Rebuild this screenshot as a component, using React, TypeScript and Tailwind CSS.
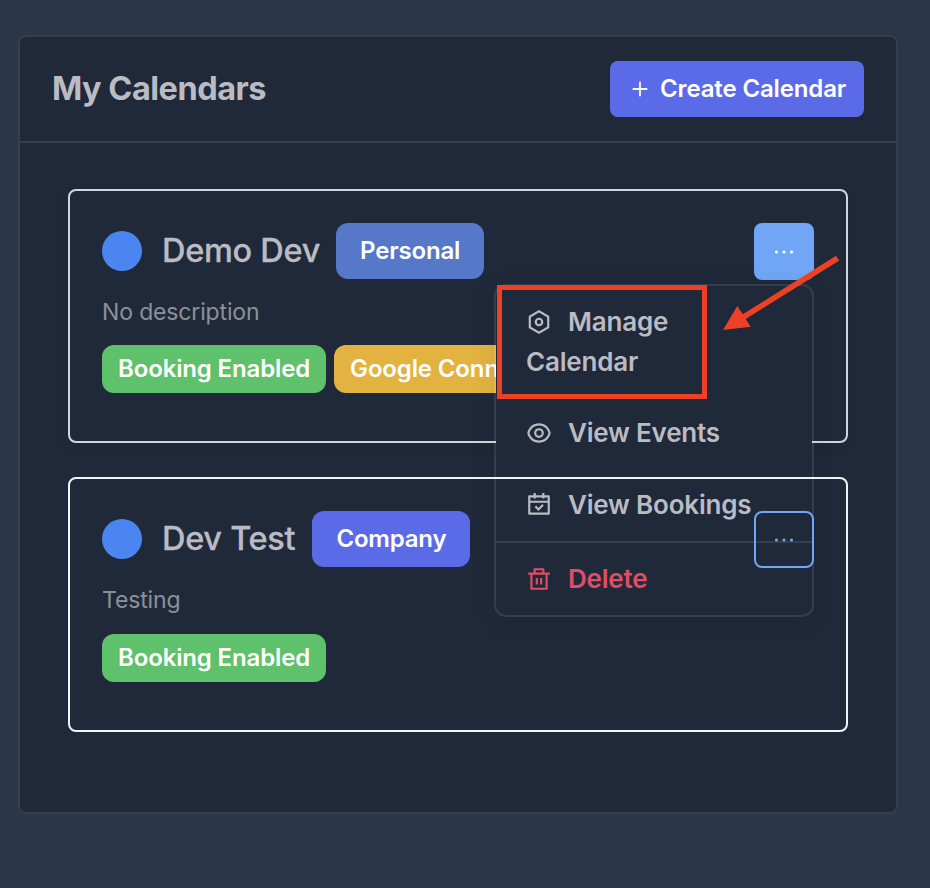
import type { ReactNode } from "react";

const iconProps = {
  viewBox: "0 0 24 24",
  fill: "currentColor",
  className: "inline-block h-[26px] w-[26px] shrink-0",
};

function ManageIcon() {
  return (
    <svg {...iconProps}>
      <path d="M12 1l9.5 5.5v11L12 23l-9.500-5.500v-11L12 1zm0 2.311L4.500 7.653v8.694l7.500 4.342 7.500-4.342V7.653L12 3.311zM12 16a4 4 0 1 1 0-8 4 4 0 0 1 0 8zm0-2a2 2 0 1 0 0-4 2 2 0 0 0 0 4z" />
    </svg>
  );
}

function EyeIcon() {
  return (
    <svg {...iconProps}>
      <path d="M12 3c5.392 0 9.878 3.880 10.819 9-.940 5.120-5.427 9-10.819 9-5.392 0-9.878-3.880-10.819-9C2.121 6.880 6.608 3 12 3zm0 16a9.005 9.005 0 0 0 8.777-7 9.005 9.005 0 0 0-17.554 0A9.005 9.005 0 0 0 12 19zm0-2.500a4.500 4.500 0 1 1 0-9 4.500 4.500 0 0 1 0 9zm0-2a2.500 2.500 0 1 0 0-5 2.500 2.500 0 0 0 0 5z" />
    </svg>
  );
}

function BookingsIcon() {
  return (
    <svg {...iconProps}>
      <path d="M9 1v2h6V1h2v2h4a1 1 0 0 1 1 1v16a1 1 0 0 1-1 1H3a1 1 0 0 1-1-1V4a1 1 0 0 1 1-1h4V1h2zm11 9H4v9h16v-9zm-4.964 1.136l1.414 1.414-4.950 4.950-3.536-3.536L9.380 12.550l2.121 2.122 3.536-3.536zM7 5H4v3h16V5h-3v1h-2V5H9v1H7V5z" />
    </svg>
  );
}

function DeleteIcon() {
  return (
    <svg {...iconProps}>
      <path d="M17 6h5v2h-2v13a1 1 0 0 1-1 1H5a1 1 0 0 1-1-1V8H2V6h5V3a1 1 0 0 1 1-1h8a1 1 0 0 1 1 1v3zm1 2H6v12h12V8zm-9 3h2v6H9v-6zm4 0h2v6h-2v-6zM9 4v2h6V4H9z" />
    </svg>
  );
}

function MoreDots() {
  return (
    <svg viewBox="0 0 20 4" fill="currentColor" className="h-1 w-5">
      <circle cx="2.500" cy="2" r="1.600" />
      <circle cx="10" cy="2" r="1.600" />
      <circle cx="17.500" cy="2" r="1.600" />
    </svg>
  );
}

function StatusBadge({ color, children }: { color: string; children: ReactNode }) {
  return (
    <span
      className={`flex h-12 shrink-0 items-center rounded-xl px-4 text-[24px] font-semibold tracking-[-0.14px] whitespace-nowrap text-white ${color}`}
    >
      {children}
    </span>
  );
}

type CardProps = {
  name: string;
  kind: string;
  kindClass: string;
  description: string;
  frameClass: string;
  moreClass: string;
  badgesClass: string;
  badges: ReactNode;
  menu?: ReactNode;
};

function CalendarCard(p: CardProps) {
  return (
    <article className={`relative rounded-lg border-2 px-8 pt-8 ${p.frameClass}`}>
      <div className="flex h-14 items-center">
        <span className="h-10 w-10 rounded-full bg-[#4b86f0]" />
        <h2 className="ml-5 text-[32.500px] font-medium tracking-[-0.28px] whitespace-nowrap text-[#bbbcc3] [-webkit-text-stroke:0.3px_#bbbcc3]">
          {p.name}
        </h2>
        <span
          className={`flex h-14 items-center justify-center rounded-xl text-[24px] font-semibold tracking-[-0.2px] text-white ${p.kindClass}`}
        >
          {p.kind}
        </span>
        <button
          className={`ml-auto flex h-[57px] w-[60px] items-center justify-center self-start rounded-lg border-2 border-[#70a6f5] ${p.moreClass}`}
        >
          <MoreDots />
        </button>
      </div>
      <p className="mt-[15px] h-9 text-[23px] leading-9 tracking-[-0.15px] text-[#8c9199]">{p.description}</p>
      <div className={`flex gap-2 overflow-hidden ${p.badgesClass}`}>{p.badges}</div>
      {p.menu}
    </article>
  );
}

function ActionsMenu() {
  return (
    <div className="absolute top-[93px] right-8 h-[333px] w-80 rounded-xl border-2 border-white/10 bg-[#20293a] bg-clip-padding text-[26px] leading-10 font-semibold tracking-[-0.2px] text-[#bbbcc3] shadow-[0_4px_24px_rgba(0,0,0,0.08)]">
      <div className="h-[111px] pt-4 pr-[110px] pl-[30px]">
        <span className="mr-4 inline-flex translate-y-1">
          <ManageIcon />
        </span>
        Manage Calendar
      </div>
      <div className="flex h-[72px] items-center gap-4 pl-[30px]">
        <EyeIcon />
        View Events
      </div>
      <div className="flex h-[74px] items-center gap-4 border-b-2 border-white/10 pl-[30px]">
        <BookingsIcon />
        View Bookings
      </div>
      <div className="flex h-[72px] items-center gap-4 pl-[30px] text-[#e04d65]">
        <DeleteIcon />
        Delete
      </div>
    </div>
  );
}

export default function App() {
  return (
    <main className="relative h-[888px] w-[930px] overflow-hidden bg-[#2b3648] pt-[35px] pl-[18px] font-['Inter',sans-serif]">
      <section className="h-[779px] w-[880px] rounded-lg border-2 border-[#353e4d] bg-[#20293a]">
        <header className="flex h-[106px] items-center justify-between border-b-2 border-[#353e4d] px-8">
          <h1 className="text-[32.500px] font-bold tracking-[-0.5px] text-[#bbbcc3]">My Calendars</h1>
          <button className="flex h-14 w-[254px] items-center rounded-lg bg-[#5b6be8] pl-[22px] text-[24px] font-semibold tracking-[-0.14px] whitespace-nowrap text-white">
            <svg viewBox="0 0 16 16" stroke="currentColor" strokeWidth="1.800" className="mr-3 h-4 w-4 shrink-0">
              <path d="M8 .700v14.600M.700 8h14.600" />
            </svg>
            <span>Create Calendar</span>
          </button>
        </header>
        <div className="flex flex-col gap-[34px] px-12 pt-[46px]">
          <CalendarCard
            name="Demo Dev"
            kind="Personal"
            kindClass="ml-4 w-[148px] bg-[#5578c8]"
            description="No description"
            frameClass="h-[254px] border-[#d3d5dc] shadow-[0_4px_12px_rgba(0,0,0,0.08)]"
            moreClass="bg-[#70a6f5] text-white"
            badgesClass="mt-[15px]"
            badges={
              <>
                <StatusBadge color="bg-[#5fc16b]">Booking Enabled</StatusBadge>
                <StatusBadge color="bg-[#e2b340]">Google Connected</StatusBadge>
              </>
            }
            menu={<ActionsMenu />}
          />
          <CalendarCard
            name="Dev Test"
            kind="Company"
            kindClass="ml-[17px] w-[158px] bg-[#5b6be8]"
            description="Testing"
            frameClass="z-10 h-[255px] border-[#f1f2f5]"
            moreClass="text-[#70a6f5]"
            badgesClass="mt-4"
            badges={<StatusBadge color="bg-[#5fc16b]">Booking Enabled</StatusBadge>}
          />
        </div>
      </section>
      <div className="absolute top-[285px] left-[497px] z-20 h-[114px] w-[210px] border-[5px] border-[#ed4025]" />
      <svg viewBox="0 0 120 80" fill="#ed4025" className="absolute top-[253px] left-[721px] z-20 h-20 w-[120px]">
        <path d="M2 77L16.300 53l5.400 8.300L115 2.700l3.300 4.800L24.700 66l5 7.700z" />
      </svg>
    </main>
  );
}
